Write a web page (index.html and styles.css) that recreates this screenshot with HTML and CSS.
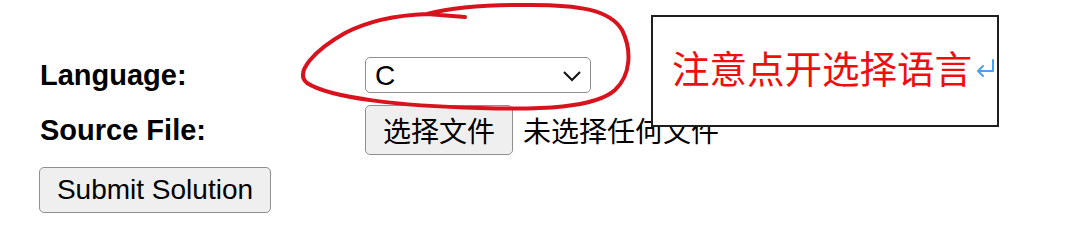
FILE: index.html
```html
<!DOCTYPE html>
<html lang="zh">
<head>
<meta charset="utf-8">
<title>Submit</title>
<link rel="stylesheet" href="styles.css">
</head>
<body>
<form class="submit-form">
  <div class="row row-lang">
    <label class="label">Language:</label>
    <span class="select-wrap">
      <select class="select"><option>C</option></select>
      <svg class="chevron" width="20" height="12" viewBox="0 0 20 12"><path d="M2 2 L10 10 L18 2" fill="none" stroke="#111" stroke-width="2"/></svg>
    </span>
  </div>
  <div class="row row-file">
    <label class="label">Source File:</label>
    <span class="file">
      <button type="button" class="btn btn-file">选择文件</button>
      <span class="file-status">未选择任何文件</span>
    </span>
  </div>
  <div class="row row-submit">
    <button type="button" class="btn btn-submit">Submit Solution</button>
  </div>
</form>

<div class="note"><span class="note-text">注意点开选择语言</span><svg class="note-ret" width="22" height="20" viewBox="0 0 22 20"><path d="M19 2 V13 H4 M9 8 L4 13 L9 18" fill="none" stroke="#4a9ff0" stroke-width="2" stroke-linejoin="round" stroke-linecap="round"/></svg></div>

<svg class="scribble" width="1080" height="240" viewBox="0 0 1080 240">
  <path d="M465 17 L427 14 Q462 5 520 5 C580 4 610 10 622 30 C632 50 631 75 615 90 C595 108 540 110 480 108 C400 106 330 98 307 83 C294 72 315 50 345 33 C370 20 400 15 427 14" fill="none" stroke="#d9131d" stroke-width="4" stroke-linecap="round" stroke-linejoin="round"/>
</svg>
</body>
</html>
```
FILE: styles.css
```css
html, body {
  margin: 0;
  padding: 0;
  background: #ffffff;
}

body {
  width: 1080px;
  height: 240px;
  position: relative;
  overflow: hidden;
  font-family: "Liberation Sans", Arial, "Noto Sans CJK SC", sans-serif;
  color: #000;
}

.submit-form {
  display: flex;
  flex-direction: column;
  gap: 12px;
  padding: 57px 0 0 39px;
}

.row {
  display: flex;
  align-items: center;
}

.label {
  width: 326px;
  padding-left: 1px;
  box-sizing: border-box;
  font-weight: bold;
  font-size: 29px;
}

.select-wrap {
  position: relative;
  display: inline-block;
}

.select {
  appearance: none;
  -webkit-appearance: none;
  width: 226px;
  height: 36px;
  box-sizing: border-box;
  padding: 0 0 0 9px;
  margin: 0;
  border: 1px solid #8f8f8f;
  border-radius: 5px;
  background: #fff;
  font-family: "Liberation Sans", Arial, sans-serif;
  font-size: 28px;
  color: #000;
}

.chevron {
  position: absolute;
  right: 9px;
  top: 13px;
  pointer-events: none;
}

.file {
  display: flex;
  align-items: center;
}

.btn {
  margin: 0;
  box-sizing: border-box;
  border: 1px solid #8f8f8f;
  border-radius: 5px;
  background: #efefef;
  color: #000;
  font-size: 28px;
}

.btn-file {
  width: 148px;
  height: 50px;
  padding: 0;
  font-family: "Noto Sans CJK SC", sans-serif;
}

.file-status {
  margin-left: 10px;
  font-size: 28px;
  font-family: "Noto Sans CJK SC", sans-serif;
}

.btn-submit {
  width: 232px;
  height: 46px;
  padding: 0;
  font-family: "Liberation Sans", Arial, sans-serif;
}

.note {
  position: absolute;
  left: 651px;
  top: 15px;
  width: 348px;
  height: 112px;
  box-sizing: border-box;
  border: 2px solid #1e1e1e;
  background: #fff;
  padding: 0 0 0 19px;
  display: flex;
  align-items: center;
  padding-bottom: 8px;
  white-space: nowrap;
}

.note-text {
  font-family: "Noto Sans CJK SC", sans-serif;
  font-size: 37.5px;
  line-height: 1;
  color: #f00d0d;
}

.note-ret {
  margin-left: 2px;
  margin-top: 2px;
  flex: none;
}

.scribble {
  position: absolute;
  left: 0;
  top: 0;
  pointer-events: none;
}
```
